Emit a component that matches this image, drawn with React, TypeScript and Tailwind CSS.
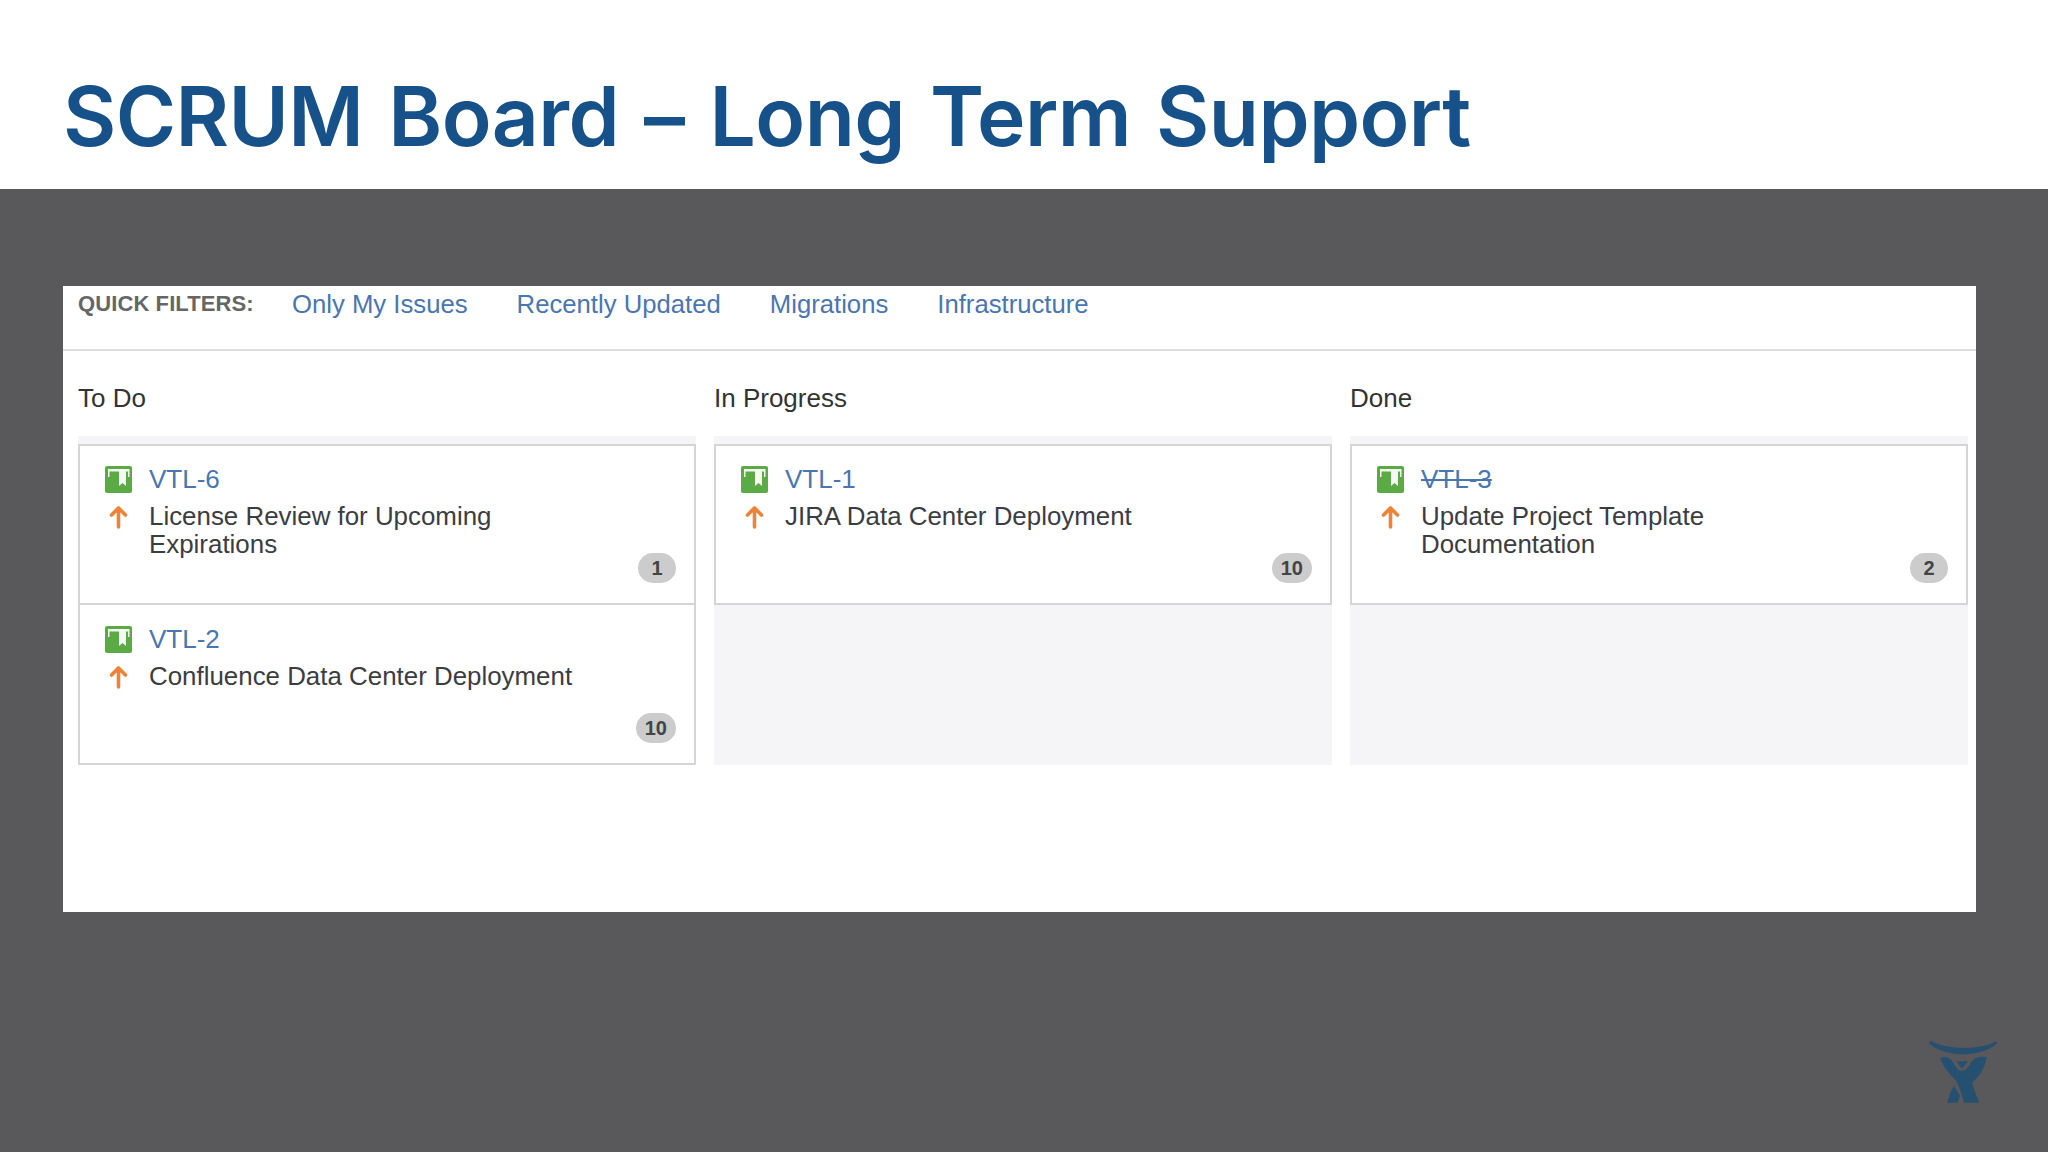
import React from 'react';

interface Issue {
  id: string;
  title: string;
  points: number;
  done?: boolean;
}

const filters = ['Only My Issues', 'Recently Updated', 'Migrations', 'Infrastructure'];

const columns: { name: string; issues: Issue[] }[] = [
  {
    name: 'To Do',
    issues: [
      { id: 'VTL-6', title: 'License Review for Upcoming Expirations', points: 1 },
      { id: 'VTL-2', title: 'Confluence Data Center Deployment', points: 10 },
    ],
  },
  {
    name: 'In Progress',
    issues: [{ id: 'VTL-1', title: 'JIRA Data Center Deployment', points: 10 }],
  },
  {
    name: 'Done',
    issues: [{ id: 'VTL-3', title: 'Update Project Template Documentation', points: 2, done: true }],
  },
];

function StoryIcon() {
  return (
    <svg width="27" height="27" viewBox="0 0 27 27" className="shrink-0">
      <rect width="27" height="27" rx="2" fill="#5bab45" />
      <path d="M3 3h21.500v8H23V5.500h-2V20l-3.500-3-3.500 3V5.500H4.500V11H3z" fill="#f4f9f2" />
    </svg>
  );
}

function PriorityArrow() {
  return (
    <svg width="27" height="24" viewBox="0 0 27 24" className="shrink-0">
      <path d="M13.500 22V3M6.500 10l7-7 7 7" fill="none" stroke="#ee8236" strokeWidth="3.600" strokeLinecap="round" strokeLinejoin="round" />
    </svg>
  );
}

function IssueCard({ issue, first }: { issue: Issue; first: boolean }) {
  return (
    <div className={`flex flex-col border-2 border-[#d5d5d8] bg-white pr-[18px] pl-[25px] ${first ? 'h-[161px] pt-[19px]' : 'h-[160px] border-t-0 pt-[20px]'}`}>
      <div className="min-h-0 flex-1">
        <div className="flex h-[28px] items-center gap-[17px]">
          <StoryIcon />
          <span className={`text-[26px] text-[#4a76b0] ${issue.done ? 'line-through' : ''}`}>{issue.id}</span>
        </div>
        <div className="mt-[9px] flex gap-[17px]">
          <div className="pt-[3px]">
            <PriorityArrow />
          </div>
          <p className="w-[430px] text-[25.900px] leading-[28px] text-[#3b3d42]">{issue.title}</p>
        </div>
      </div>
      <span className="mb-[20px] flex h-[30px] min-w-[38px] shrink-0 items-center justify-center self-end rounded-full bg-[#cccccc] px-[9px] text-[20px] font-bold text-[#444444]">
        {issue.points}
      </span>
    </div>
  );
}

function AtlassianLogo() {
  return (
    <svg width="120" height="100" viewBox="0 0 360 300">
      <path d="M88 70C140 112 240 112 290 70L288 66C240 92 140 92 92 64z" fill="#26506f" stroke="#26506f" strokeWidth="3" />
      <path d="M168 124h36l-18 22z" fill="#26506f" />
      <path d="M120 114c18-8 32 0 40 14 8 16 16 24 26 24 12 0 20-12 28-26 8-12 26-20 46-14-6 34-20 56-44 76 6 22 14 40 22 60h-46c-6-26-12-44-24-66-18-18-38-40-48-68z" fill="#26506f" />
      <path d="M162 198l18 30-8 20h-30c4-18 10-34 20-50z" fill="#26506f" />
    </svg>
  );
}

export default function App() {
  return (
    <div className="flex h-[1152px] w-[2048px] flex-col overflow-hidden bg-[#59585b] font-['Liberation_Sans',Arial,sans-serif]">
      <header className="flex h-[189px] shrink-0 items-start bg-white pt-[69px] pl-[63px]">
        <h1 className="font-['Inter','Liberation_Sans',sans-serif] text-[82px] leading-[96px] font-semibold tracking-[-0.6px] [word-spacing:5px] whitespace-pre text-[#17518a]">
          SCRUM Board – Long Term Support
        </h1>
      </header>

      <main className="mt-[97px] mr-[72px] ml-[63px] flex h-[626px] shrink-0 flex-col bg-white">
        <div className="flex h-[65px] shrink-0 items-start gap-[49px] border-b-2 border-[#dddddd] pt-[2px] pl-[15px]">
          <span className="w-[165px] text-[22px] leading-[32px] font-bold tracking-[0.1px] whitespace-nowrap text-[#666666]">QUICK FILTERS:</span>
          {filters.map((filter) => (
            <span key={filter} className="text-[25.700px] leading-[32px] text-[#4a76b0]">
              {filter}
            </span>
          ))}
        </div>

        <div className="grid grid-cols-3 gap-[18px] pr-[8px] pl-[15px]">
          {columns.map((column) => (
            <section key={column.name} className="flex flex-col">
              <h2 className="flex h-[85px] items-center pt-[9px] text-[26px] font-normal text-[#333333]">{column.name}</h2>
              <div className="h-[329px] bg-[#f5f4f7] pt-[8px]">
                {column.issues.map((issue, index) => (
                  <IssueCard key={issue.id} issue={issue} first={index === 0} />
                ))}
              </div>
            </section>
          ))}
        </div>
      </main>

      <footer className="flex flex-1 items-end justify-end pr-[28px] pb-[32px]">
        <AtlassianLogo />
      </footer>
    </div>
  );
}
